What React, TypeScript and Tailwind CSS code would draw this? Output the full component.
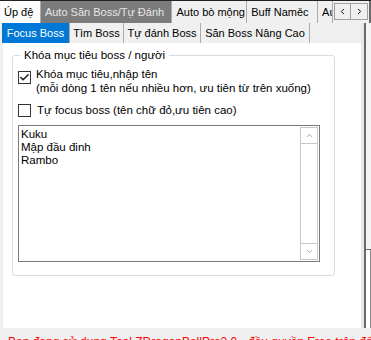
import { Check, ChevronUp, ChevronDown, ChevronLeft, ChevronRight } from "lucide-react";

const topTabs = [
  { label: "Úp đệ", w: "w-[41px]" },
  { label: "Auto Săn Boss/Tự Đánh", w: "w-[132px]", active: true },
  { label: "Auto bò mộng", w: "w-[75px]" },
  { label: "Buff Naměc", w: "w-[71px]" },
  { label: "Au", w: "w-[15px]" },
];

const subTabs = [
  { label: "Focus Boss", w: "w-[68px]", active: true },
  { label: "Tìm Boss", w: "w-[54px]" },
  { label: "Tự đánh Boss", w: "w-[77px]" },
  { label: "Săn Boss Nâng Cao", w: "w-[109px]" },
];

const names = ["Kuku", "Mập đầu đinh", "Rambo"];

function CheckBox({ checked }: { checked?: boolean }) {
  return (
    <div className="w-[13px] h-[13px] border border-[#333] bg-white flex items-center justify-center shrink-0">
      {checked && <Check size={11} strokeWidth={3.5} className="text-[#222]" />}
    </div>
  );
}

export default function App() {
  return (
    <div
      className="w-[371px] h-[340px] bg-[#f0f0f0] overflow-hidden flex flex-col text-[11.5px] text-black"
      style={{ fontFamily: '"Liberation Sans", Arial, sans-serif' }}
    >
      {/* top tab strip */}
      <div className="h-[23px] flex shrink-0 border-t border-[#222] text-[11px]">
        {topTabs.map((t) => (
          <div
            key={t.label}
            className={`${t.w} h-full flex items-center pl-[4px] whitespace-nowrap overflow-hidden border-r border-[#acacac] ${
              t.active ? "bg-[#7b7b7b] text-[#e6e6e6]" : t.label === "Úp đệ" ? "bg-[#fbfbfb]" : "bg-[#f0f0f0]"
            }`}
          >
            {t.label}
          </div>
        ))}
        <div className="flex mt-[2px] ml-[1px] h-[17px]">
          <div className="w-[17px] border border-[#a0a0a0] bg-[#f0f0f0] flex items-center justify-center">
            <ChevronLeft size={9} strokeWidth={2.5} />
          </div>
          <div className="w-[17px] border border-l-0 border-[#a0a0a0] bg-[#f0f0f0] flex items-center justify-center">
            <ChevronRight size={9} strokeWidth={2.5} />
          </div>
        </div>
        <div className="w-[2px] h-full bg-[#6a6a6a] ml-[1px]" />
      </div>

      <div className="flex flex-1 min-h-0">
        <div className="w-[361px] flex flex-col">
          {/* sub tabs */}
          <div className="h-[20px] flex pl-[2px] shrink-0 text-[11px]">
            {subTabs.map((t) => (
              <div
                key={t.label}
                className={`${t.w} h-full flex items-center justify-center whitespace-nowrap border-r border-[#acacac] ${
                  t.active ? "bg-[#0078d7] text-white" : "bg-[#f0f0f0]"
                }`}
              >
                {t.label}
              </div>
            ))}
          </div>

          {/* panel */}
          <div className="ml-[3px] h-[285px] bg-white flex flex-col pt-[6px] pl-[9px]">
            <fieldset className="w-[323px] h-[227px] border border-[#d5dde3] rounded-[3px] px-[4px] pb-0 m-0">
              <legend className="ml-[3px] px-[4px] leading-[13px]">Khóa mục tiêu boss / người</legend>
              <div className="flex gap-[5px] mt-[5px] ml-[1px]">
                <div className="mt-[4px]">
                  <CheckBox checked />
                </div>
                <div className="leading-[14px]">
                  <div>Khóa mục tiêu,nhập tên</div>
                  <div className="whitespace-nowrap">(mỗi dòng 1 tên nếu nhiều hơn, ưu tiên từ trên xuống)</div>
                </div>
              </div>
              <div className="flex items-center gap-[6px] mt-[8px] ml-[1px]">
                <CheckBox />
                <div className="leading-[14px]">Tự focus boss (tên chữ đỏ,ưu tiên cao)</div>
              </div>
              <div className="mt-[8px] ml-[1px] w-[302px] h-[137px] border border-[#7a7a7a] flex">
                <div className="flex-1 pl-[2px] pt-[2px] leading-[13px]">
                  {names.map((n) => (
                    <div key={n}>{n}</div>
                  ))}
                </div>
                <div className="w-[18px] mt-[1px] mb-[1px] mr-[1px] border border-[#c8c8c8] flex flex-col justify-between">
                  <div className="h-[16px] border-b border-[#c8c8c8] flex items-center justify-center">
                    <ChevronUp size={9} strokeWidth={2} className="text-[#888]" />
                  </div>
                  <div className="h-[16px] border-t border-[#c8c8c8] flex items-center justify-center">
                    <ChevronDown size={9} strokeWidth={2} className="text-[#888]" />
                  </div>
                </div>
              </div>
            </fieldset>
          </div>
        </div>

        {/* right edge of the next control */}
        <div className="flex-1 flex">
          <div className="w-[3px] bg-[#e8e8e8]" />
          <div className="w-[2px] bg-[#6a6a6a]" />
          <div className="flex-1 flex flex-col">
            <div className="h-[226px] bg-[#f4f4f4]" />
            <div className="h-[1px] bg-[#6a6a6a]" />
            <div className="flex-1 bg-white border-r border-[#888]" />
          </div>
        </div>
      </div>

      {/* status line */}
      <div className="h-[12px] shrink-0 pl-[8px] pt-[7px] text-[12px] text-[#ff0000] whitespace-nowrap leading-[14px]">
        Bạn đang sử dụng Tool ZDragonBallPro2.0 - đầu quyền Free trên đất tại VPS
      </div>
    </div>
  );
}
